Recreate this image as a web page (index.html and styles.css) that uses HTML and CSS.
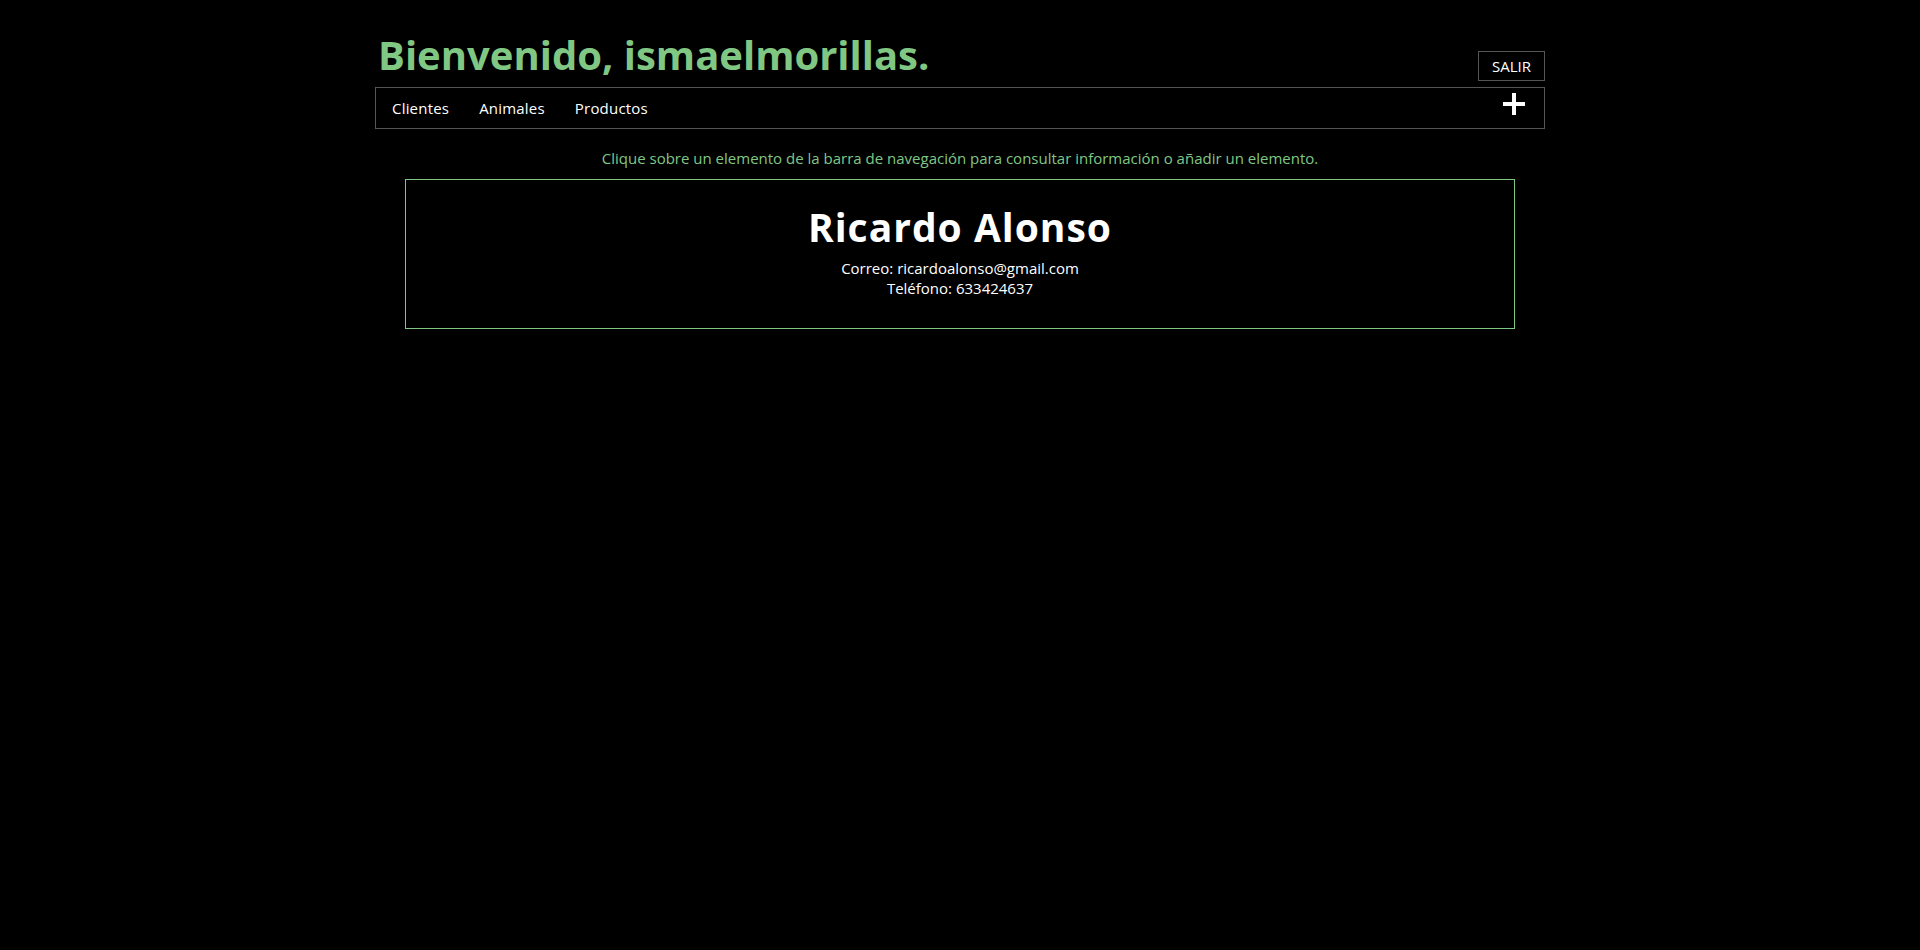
FILE: index.html
```html
<!DOCTYPE html>
<html lang="es">
<head>
<meta charset="utf-8">
<title>Bienvenido</title>
<link rel="stylesheet" href="styles.css">
</head>
<body>
<div class="container">
  <header class="top">
    <h1 class="welcome">Bienvenido, ismaelmorillas.</h1>
    <button class="logout">SALIR</button>
  </header>
  <nav class="navbar">
    <ul class="nav-links">
      <li><a class="nav-link" href="#">Clientes</a></li>
      <li><a class="nav-link" href="#">Animales</a></li>
      <li><a class="nav-link" href="#">Productos</a></li>
    </ul>
    <a class="add" href="#" aria-label="Añadir">
      <svg width="22" height="22" viewBox="0 0 22 22"><rect x="9" y="0" width="4" height="22" fill="#fff"/><rect x="0" y="9" width="22" height="4" fill="#fff"/></svg>
    </a>
  </nav>
  <p class="hint">Clique sobre un elemento de la barra de navegación para consultar información o añadir un elemento.</p>
  <section class="card">
    <h2 class="card-name">Ricardo Alonso</h2>
    <p class="card-line">Correo: ricardoalonso@gmail.com</p>
    <p class="card-line">Teléfono: 633424637</p>
  </section>
</div>
</body>
</html>
```
FILE: styles.css
```css
html, body {
  margin: 0;
  padding: 0;
  background: #000;
  color: #fff;
  font-family: "Open Sans", "Liberation Sans", sans-serif;
}

.container {
  width: 1170px;
  margin: 0 auto;
}

.top {
  display: flex;
  justify-content: space-between;
  align-items: flex-end;
  padding-top: 29px;
  margin-bottom: 6px;
}

.welcome {
  margin: 0 0 0 3px;
  font-size: 40px;
  line-height: 52px;
  font-weight: 700;
  color: #81c784;
}

.logout {
  margin: 0;
  width: 67px;
  height: 30px;
  padding: 0;
  box-sizing: border-box;
  background: transparent;
  border: 1px solid #555;
  color: #fff;
  font-family: inherit;
  font-size: 15px;
}

.navbar {
  display: flex;
  align-items: center;
  justify-content: space-between;
  height: 42px;
  box-sizing: border-box;
  border: 1px solid #555;
}

.nav-links {
  display: flex;
  list-style: none;
  margin: 0;
  padding: 0 0 0 1px;
}

.nav-link {
  display: block;
  padding: 0 15px;
  color: #fff;
  text-decoration: none;
  font-size: 15px;
  line-height: 20px;
  letter-spacing: 0.2px;
}

.add {
  display: flex;
  margin: 0 19px 8px 0;
}

.hint {
  margin: 19px 0 0;
  text-align: center;
  font-size: 15px;
  line-height: 20px;
  color: #81c784;
}

.card {
  margin: 11px 30px 0;
  border: 1px solid #81c784;
  height: 150px;
  box-sizing: border-box;
  text-align: center;
  padding-top: 23px;
}

.card-name {
  margin: 0 0 7px;
  font-size: 39px;
  line-height: 48px;
  font-weight: 700;
  letter-spacing: 1px;
}

.card-line {
  margin: 0;
  font-size: 15px;
  line-height: 20px;
}
```
